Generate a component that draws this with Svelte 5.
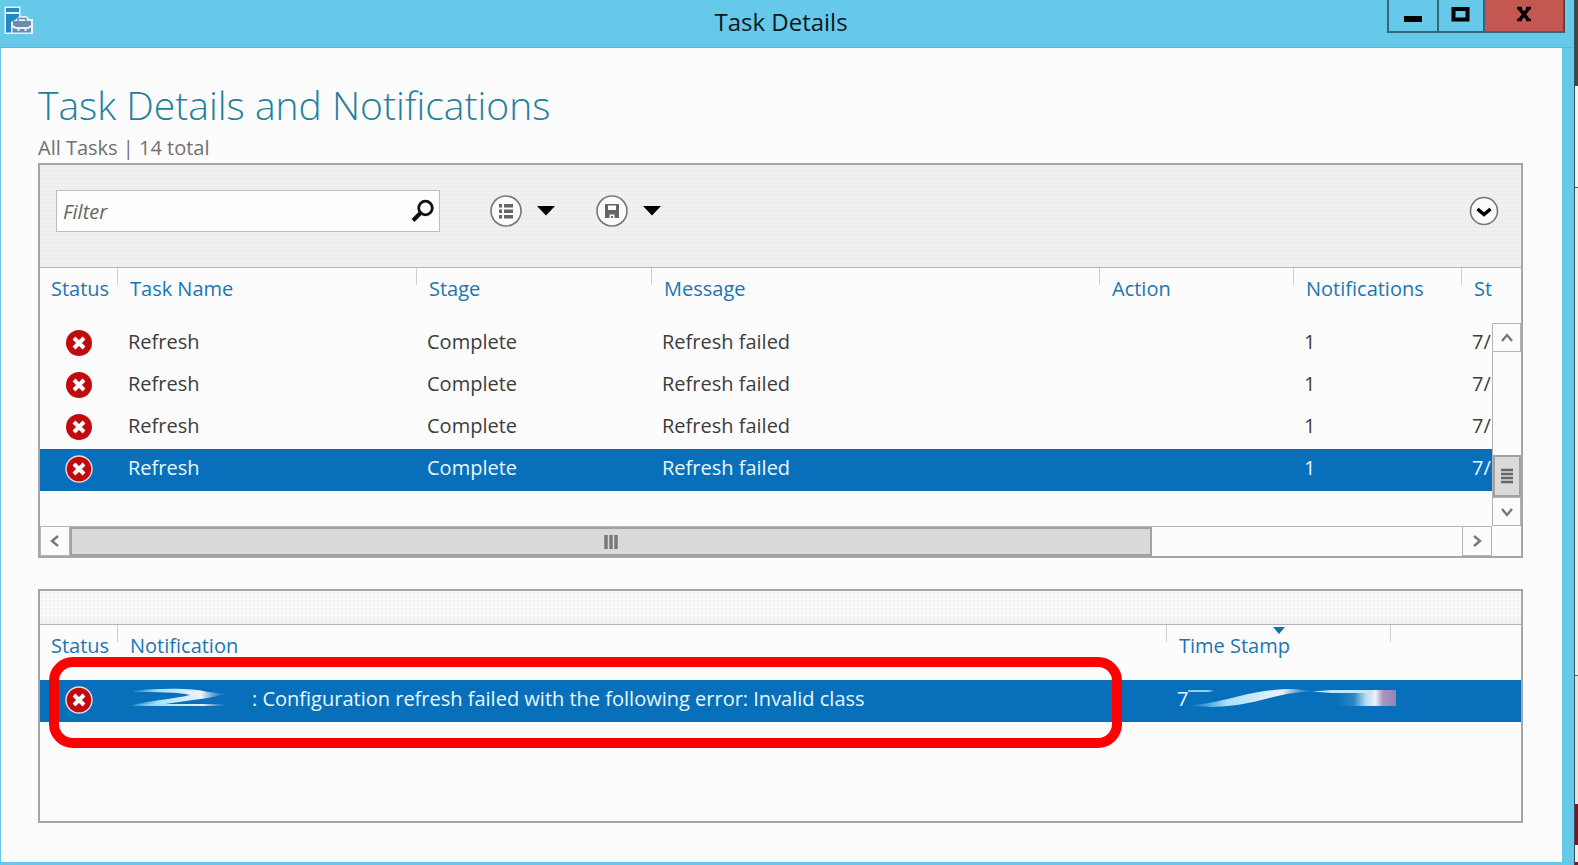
<script>
    let filter = $state('');
    let selected = $state(3);

    const tasks = [
        { name: 'Refresh', stage: 'Complete', message: 'Refresh failed', action: '', count: 1, started: '7/' },
        { name: 'Refresh', stage: 'Complete', message: 'Refresh failed', action: '', count: 1, started: '7/' },
        { name: 'Refresh', stage: 'Complete', message: 'Refresh failed', action: '', count: 1, started: '7/' },
        { name: 'Refresh', stage: 'Complete', message: 'Refresh failed', action: '', count: 1, started: '7/' }
    ];
</script>

<svelte:head>
    <title>Task Details</title>
</svelte:head>

{#snippet errorIcon(outlined)}
    <svg class="error" width="28" height="28" viewBox="0 0 28 28" role="img" aria-label="Error">
        <circle cx="14" cy="14" r="13" fill="#c00a0e" stroke={outlined ? '#f3d9dc' : 'none'} stroke-width="1.4" />
        <path d="M9 9l10 10M19 9L9 19" stroke="#fff" stroke-width="4" />
    </svg>
{/snippet}

{#snippet arrow(d)}
    <svg width="14" height="14" viewBox="0 0 14 14" aria-hidden="true">
        <path {d} fill="none" stroke="#777" stroke-width="2.4" />
    </svg>
{/snippet}

<div class="desktop">
    <div class="window">
        <header class="titlebar">
            <svg class="app-icon" width="30" height="30" viewBox="0 0 30 30" aria-hidden="true">
                <path d="M.5.500h16v10l2-.5h4l3 3h3.500v15H.5z" fill="#e4f3fa" />
                <path d="M2 2h13v4H2zM2 8h13v2.500L11 14l-4 2v10.500H2z" fill="#2388c4" />
                <path d="M9 15h18v4l-3 2H12l-3-2zM8.500 21.500l3 1.500h2v2h2v-2h5v2h2v-2h2l2.500-1.500V26.500h-18.500z" fill="#6f8bad" />
                <path d="M14 15v-2.500h8V15" fill="none" stroke="#6f8bad" stroke-width="1.500" />
            </svg>
            <span class="caption">Task Details</span>
            <div class="controls">
                <button class="min" aria-label="Minimize">
                    <svg width="20" height="18" viewBox="0 0 20 18"><path d="M1 11h18v6H1z" fill="#000" /></svg>
                </button>
                <button class="max" aria-label="Maximize">
                    <svg width="20" height="18" viewBox="0 0 20 18"><path d="M2.500 4h14v10.500h-14z" fill="none" stroke="#000" stroke-width="4" /></svg>
                </button>
                <button class="close" aria-label="Close">
                    <svg width="18" height="18" viewBox="0 0 18 18">
                        <path d="M2 3h5M11 3h5M2 15h5M11 15h5" stroke="#000" stroke-width="2.400" />
                        <path d="M4 3l9.500 12M14 3L4.500 15" stroke="#000" stroke-width="3.600" />
                    </svg>
                </button>
            </div>
        </header>

        <main>
            <h1>Task Details and Notifications</h1>
            <p class="summary">All Tasks | 14 total</p>

            <section class="panel">
                <div class="toolbar">
                    <div class="search">
                        <input type="text" aria-label="Filter" placeholder="Filter" bind:value={filter} spellcheck="false" />
                        <button aria-label="Search">
                            <svg width="24" height="24" viewBox="0 0 24 24">
                                <circle cx="14.500" cy="9" r="6.800" fill="none" stroke="#111" stroke-width="2.800" />
                                <path d="M9.500 14L2 21.500" stroke="#111" stroke-width="4" />
                            </svg>
                        </button>
                    </div>
                    <button class="tool" aria-label="View options">
                        <svg width="32" height="32" viewBox="0 0 32 32">
                            <circle cx="16" cy="16" r="15" fill="#fbfbfb" stroke="#777" stroke-width="1.600" />
                            <path d="M9 9h3v3.500H9zM14 9h9v3.500h-9zM9 14.500h3V18H9zM14 14.500h9V18h-9zM9 20h3v3.500H9zM14 20h9v3.500h-9z" fill="#666" />
                        </svg>
                        <svg width="18" height="10" viewBox="0 0 18 10"><path d="M0 0h18L9 9.500z" fill="#000" /></svg>
                    </button>
                    <button class="tool" aria-label="Save query">
                        <svg width="32" height="32" viewBox="0 0 32 32">
                            <circle cx="16" cy="16" r="15" fill="#fbfbfb" stroke="#777" stroke-width="1.600" />
                            <path d="M9 9h14v14H9z" fill="#666" />
                            <path d="M12 10.500h8v4.500h-8zM13.500 19.500h5v3.500h-1.500v-2h-2v2h-1.500z" fill="#fbfbfb" />
                        </svg>
                        <svg width="18" height="10" viewBox="0 0 18 10"><path d="M0 0h18L9 9.500z" fill="#000" /></svg>
                    </button>
                    <button class="expand" aria-label="Expand">
                        <svg width="30" height="30" viewBox="0 0 30 30">
                            <circle cx="15" cy="15" r="13.500" fill="#fbfbfb" stroke="#777" stroke-width="1.600" />
                            <path d="M8.500 13l6.500 5.500 6.500-5.500" fill="none" stroke="#000" stroke-width="3.600" />
                        </svg>
                    </button>
                </div>

                <div class="grid">
                    <div class="rows">
                        <table>
                            <colgroup>
                                <col class="c-status" /><col class="c-name" /><col class="c-stage" /><col />
                                <col class="c-action" /><col class="c-count" /><col class="c-start" />
                            </colgroup>
                            <thead>
                                <tr>
                                    <th>Status</th>
                                    <th>Task Name</th>
                                    <th>Stage</th>
                                    <th>Message</th>
                                    <th>Action</th>
                                    <th>Notifications</th>
                                    <th>St</th>
                                </tr>
                            </thead>
                            <tbody>
                                {#each tasks as task, i}
                                    <tr class:selected={selected === i} onclick={() => (selected = i)}>
                                        <td>{@render errorIcon(selected === i)}</td>
                                        <td>{task.name}</td>
                                        <td>{task.stage}</td>
                                        <td>{task.message}</td>
                                        <td>{task.action}</td>
                                        <td>{task.count}</td>
                                        <td>{task.started}</td>
                                    </tr>
                                {/each}
                            </tbody>
                        </table>
                    </div>
                    <div class="vscroll">
                        <button aria-label="Scroll up">{@render arrow('M2 10l5-6 5 6')}</button>
                        <div class="track">
                            <div class="thumb">
                                <svg width="14" height="16" viewBox="0 0 14 16"><path d="M1 2h12M1 6h12M1 10h12M1 14h12" stroke="#666" stroke-width="2.400" /></svg>
                            </div>
                        </div>
                        <button aria-label="Scroll down">{@render arrow('M2 4l5 6 5-6')}</button>
                    </div>
                    <div class="hscroll">
                        <button aria-label="Scroll left">{@render arrow('M10 2L4 7l6 5')}</button>
                        <div class="track">
                            <div class="thumb">
                                <svg width="16" height="14" viewBox="0 0 16 14"><path d="M3 0v14M8 0v14M13 0v14" stroke="#777" stroke-width="3.400" /></svg>
                            </div>
                        </div>
                        <button aria-label="Scroll right">{@render arrow('M4 2l6 5-6 5')}</button>
                    </div>
                </div>
            </section>

            <section class="panel notifications">
                <div class="strip"></div>
                <table>
                    <colgroup>
                        <col class="c-status" /><col /><col class="c-time" /><col class="c-rest" />
                    </colgroup>
                    <thead>
                        <tr>
                            <th>Status</th>
                            <th>Notification</th>
                            <th class="sorted">
                                Time Stamp
                                <svg width="12" height="7" viewBox="0 0 12 7" aria-hidden="true"><path d="M0 0h12L6 7z" fill="#1272b0" /></svg>
                            </th>
                            <th></th>
                        </tr>
                    </thead>
                    <tbody>
                        <tr class="selected">
                            <td>{@render errorIcon(true)}</td>
                            <td>
                                <div class="message">
                                    <svg width="102" height="20" viewBox="0 0 102 20" aria-hidden="true">
                                        <defs>
                                            <linearGradient id="smear">
                                                <stop offset="0" stop-color="#7cd0fa" stop-opacity="0" />
                                                <stop offset=".3" stop-color="#a5e0fb" />
                                                <stop offset=".75" stop-color="#f0f2fa" />
                                                <stop offset="1" stop-color="#7cb6e8" stop-opacity="0" />
                                            </linearGradient>
                                            <filter id="soft"><feGaussianBlur stdDeviation="0.7" /></filter>
                                        </defs>
                                        <g filter="url(#soft)">
                                            <path d="M6 3C30 0 65 0 80 4l18 2-18 4C60 13 40 15 26 18H0c25-6 45-7 62-11C50 4 30 4 6 4z" fill="url(#smear)" />
                                            <path d="M4 16h94v2H4z" fill="url(#smear)" />
                                        </g>
                                    </svg>
                                    <span>: Configuration refresh failed with the following error: Invalid class</span>
                                </div>
                            </td>
                            <td colspan="2">
                                <div class="stamp">
                                    <span>7</span>
                                    <svg width="208" height="20" viewBox="0 0 208 20" aria-hidden="true">
                                        <defs>
                                            <linearGradient id="fade">
                                                <stop offset="0" stop-color="#0870bb" />
                                                <stop offset=".3" stop-color="#2b87c8" />
                                                <stop offset=".5" stop-color="#b5dcf4" />
                                                <stop offset=".66" stop-color="#eef2fa" />
                                                <stop offset=".78" stop-color="#a994bd" />
                                                <stop offset="1" stop-color="#9484b6" />
                                            </linearGradient>
                                        </defs>
                                        <g filter="url(#soft)">
                                            <path d="M0 2h20l6 1-6 1H0z" fill="#8fccf0" />
                                            <path d="M0 17.500C40 15 60 1 106 1l20 2-20 2C85 7 60 19 24 19z" fill="url(#smear)" />
                                            <path d="M124 3.500l20-1.500h40v3h-40z" fill="#c9e6f8" />
                                        </g>
                                        <path d="M148 5h36v-3h24v16h-60z" fill="url(#fade)" />
                                    </svg>
                                </div>
                            </td>
                        </tr>
                    </tbody>
                </table>
                <div class="highlight"></div>
            </section>
        </main>
    </div>
    <div class="behind"></div>
</div>

<style>
    :global(body) {
        margin: 0;
        font-family: "Open Sans", "Noto Sans", sans-serif;
        font-size: 20px;
        color: #3c3c3c;
    }

    button {
        display: flex;
        align-items: center;
        justify-content: center;
        box-sizing: border-box;
        padding: 0;
        border: none;
        background: none;
    }

    svg { display: block; flex: none; }

    .desktop {
        display: grid;
        grid-template-columns: 1fr 3px;
        min-height: 100vh;
    }

    .window {
        display: flex;
        flex-direction: column;
        background: #66c9e9;
        border-right: 1px solid #34505c;
    }

    .behind {
        background: linear-gradient(#454545 86px, #f4f4f4 86px 187px, #555 187px 188px, #ededed 188px 675px, #666 675px 676px, #e4e4e4 676px 804px, #8c1014 804px 845px, #eee 845px 862px, #8c1014 862px);
    }

    .titlebar {
        display: grid;
        grid-template-columns: auto 1fr auto;
        height: 47px;
        border-bottom: 1px solid #7fa9bd;
    }

    .app-icon {
        grid-area: 1 / 1;
        margin: 6px 0 0 4px;
    }

    .caption {
        grid-area: 1 / 1 / 2 / 4;
        padding-right: 12px;
        font-size: 24px;
        line-height: 43px;
        text-align: center;
        color: #10181c;
    }

    .controls {
        grid-area: 1 / 3;
        display: flex;
        height: 33px;
        margin-right: 9px;
    }

    .controls button {
        border: 2px solid #35667a;
        border-top: none;
        border-right: none;
        padding-bottom: 4px;
    }

    .controls .min { width: 50px; }
    .controls .max { width: 46px; }

    .controls .close {
        width: 82px;
        border-right: 2px solid #6b3d42;
        background: #c2584f;
    }

    main {
        flex: 1;
        display: flex;
        flex-direction: column;
        margin: 0 12px 3px 1px;
        padding: 29px 39px 39px 37px;
        background: #fcfcfc;
    }

    h1 {
        margin: 0;
        font-size: 39px;
        font-weight: 300;
        line-height: 56px;
        color: #237f9f;
    }

    .summary {
        margin: 0;
        line-height: 30px;
        color: #707070;
    }

    .panel {
        position: relative;
        border: 2px solid #a6a6a6;
    }

    .toolbar {
        display: flex;
        align-items: center;
        height: 92px;
        padding: 0 22px 10px 16px;
        border-bottom: 1px solid #b4b4b4;
        background: radial-gradient(#eaebeb 1px, transparent 1px) 0 0 / 4px 4px, #f0f0f0;
    }

    .search {
        display: flex;
        align-items: center;
        box-sizing: border-box;
        width: 384px;
        height: 42px;
        margin-right: 50px;
        padding-right: 4px;
        border: 1px solid #bdbdbd;
        background: #fdfdfd;
    }

    .search input {
        flex: 1;
        min-width: 0;
        padding: 0 6px;
        border: none;
        outline: none;
        background: none;
        font: inherit;
        color: #333;
    }

    .search input::placeholder {
        font-style: italic;
        color: #666;
        opacity: 1;
    }

    .tool {
        gap: 15px;
        margin-right: 41px;
    }

    .expand { margin-left: auto; }

    .grid {
        display: grid;
        grid-template-columns: 1fr 29px;
        grid-template-rows: 258px 30px;
    }

    .rows { overflow: hidden; }

    table {
        width: 100%;
        table-layout: fixed;
        border-collapse: collapse;
    }

    .c-status { width: 77px; }
    .c-name { width: 299px; }
    .c-stage { width: 235px; }
    .c-action { width: 194px; }
    .c-count { width: 168px; }
    .c-start { width: 31px; }
    .c-time { width: 224px; }
    .c-rest { width: 131px; }

    th {
        position: relative;
        height: 40px;
        padding: 0 0 15px 13px;
        background: linear-gradient(#cfcfcf, #cfcfcf) no-repeat left top / 1px 17px;
        font-weight: 400;
        text-align: left;
        white-space: nowrap;
        color: #1b75b3;
    }

    th:first-child {
        padding-left: 11px;
        background: none;
    }

    .sorted svg {
        position: absolute;
        top: 2px;
        left: 107px;
    }

    td {
        height: 36px;
        padding: 0 0 6px 11px;
        white-space: nowrap;
    }

    td:first-child {
        height: 40px;
        padding: 0 0 2px 25px;
    }

    .selected { background: #0870bb; color: #e9f7ff; }

    .vscroll {
        display: flex;
        flex-direction: column;
        margin-top: 55px;
        border-left: 1px solid #b4b4b4;
    }

    .vscroll button {
        height: 29px;
        border: 1px solid #b4b4b4;
        border-left: none;
    }

    .vscroll .track {
        flex: 1;
        display: flex;
        align-items: flex-end;
    }

    .vscroll .thumb {
        width: 28px;
        height: 42px;
    }

    .thumb {
        display: flex;
        align-items: center;
        justify-content: center;
        box-sizing: border-box;
        border: 2px solid #a2a2a2;
        background: #dadada;
    }

    .hscroll {
        display: flex;
        border-top: 1px solid #b4b4b4;
    }

    .hscroll button {
        width: 30px;
        border: 1px solid #b4b4b4;
        border-top: none;
    }

    .hscroll .track { flex: 1; }

    .hscroll .thumb {
        width: calc(78% - 4px);
        height: 100%;
    }

    .notifications {
        flex: 1;
        margin-top: 31px;
    }

    .strip {
        height: 33px;
        border-bottom: 1px solid #b4b4b4;
        background: radial-gradient(#f0f0f0 1px, transparent 1px) 0 0 / 4px 4px, linear-gradient(#fafafa 75%, #efefef);
    }

    .message {
        display: flex;
        align-items: center;
        gap: 22px;
    }

    .stamp {
        display: flex;
        align-items: center;
    }

    .highlight {
        position: absolute;
        top: 66px;
        left: 9px;
        right: 399px;
        height: 71px;
        border: 10px solid #ff0000;
        border-radius: 24px;
        pointer-events: none;
    }
</style>
